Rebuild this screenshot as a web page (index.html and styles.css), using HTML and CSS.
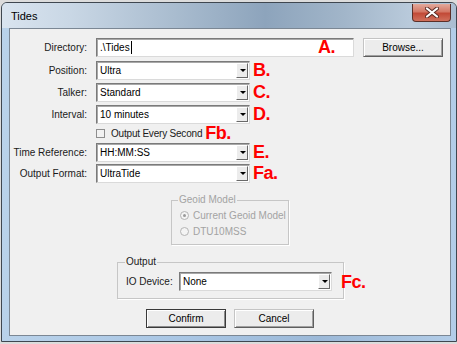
FILE: index.html
```html
<!DOCTYPE html>
<html lang="en">
<head>
    <meta charset="UTF-8">
    <title>Tides</title>
    <link rel="stylesheet" href="styles.css">
</head>
<body>
    <div class="window">
        <div class="titlebar">
            <span class="title">Tides</span>
            <div class="close">
                <svg width="14" height="11" viewBox="0 0 14 11">
                    <path d="M2 1.5 L12 9.5 M12 1.5 L2 9.5" stroke="#5a2a22" stroke-width="4" stroke-linecap="round"/>
                    <path d="M2 1.5 L12 9.5 M12 1.5 L2 9.5" stroke="#fff" stroke-width="2.2" stroke-linecap="round"/>
                </svg>
            </div>
        </div>
        <div class="client">
            <div class="row row-dir">
                <label class="lbl">Directory:</label>
                <div class="textbox">.\Tides<span class="caret"></span><span class="mark mark-a">A.</span></div>
                <button class="btn browse">Browse...</button>
            </div>
            <div class="row row-pos">
                <label class="lbl">Position:</label>
                <div class="combo"><span class="value">Ultra</span><span class="drop"></span></div>
                <span class="mark">B.</span>
            </div>
            <div class="row row-next">
                <label class="lbl">Talker:</label>
                <div class="combo"><span class="value">Standard</span><span class="drop"></span></div>
                <span class="mark">C.</span>
            </div>
            <div class="row row-next">
                <label class="lbl">Interval:</label>
                <div class="combo"><span class="value">10 minutes</span><span class="drop"></span></div>
                <span class="mark">D.</span>
            </div>
            <div class="row row-check">
                <span class="checkbox"></span>
                <span class="check-text">Output Every Second</span>
                <span class="mark mark-fb">Fb.</span>
            </div>
            <div class="row row-time">
                <label class="lbl">Time Reference:</label>
                <div class="combo"><span class="value">HH:MM:SS</span><span class="drop"></span></div>
                <span class="mark">E.</span>
            </div>
            <div class="row row-format">
                <label class="lbl">Output Format:</label>
                <div class="combo"><span class="value">UltraTide</span><span class="drop"></span></div>
                <span class="mark">Fa.</span>
            </div>

            <div class="group geoid">
                <span class="legend">Geoid Model</span>
                <div class="radio-row"><span class="radio checked"></span>Current Geoid Model</div>
                <div class="radio-row"><span class="radio"></span>DTU10MSS</div>
            </div>

            <div class="group output">
                <span class="legend">Output</span>
                <div class="io-row">
                    <label class="io-lbl">IO Device:</label>
                    <div class="combo io-combo"><span class="value">None</span><span class="drop"></span></div>
                </div>
                <span class="mark mark-fc">Fc.</span>
            </div>

            <div class="buttons">
                <button class="btn default">Confirm</button>
                <button class="btn">Cancel</button>
            </div>
        </div>
    </div>
</body>
</html>
```

FILE: styles.css
```css
body {
    margin: 0;
    background-color: #dcdcdc;
    font-family: "Liberation Sans", Arial, sans-serif;
    font-size: 10px;
    color: #1a1a1a;
    overflow: hidden;
}
.window {
    margin: 2px 0 0 1px;
    width: 456px;
    height: 340px;
    box-sizing: border-box;
    border: 1px solid #3f4750;
    border-radius: 6px 6px 0 0;
    background: linear-gradient(90deg, #b9d2ea 0%, #a9c6e4 40%, #9cb9d8 70%, #b3cde8 100%);
    display: flex;
    flex-direction: column;
}
.titlebar {
    height: 25px;
    display: flex;
    align-items: flex-start;
    justify-content: space-between;
    border-radius: 5px 5px 0 0;
    background: linear-gradient(90deg, #d9e4ef 0%, #c9d7e5 15%, #a9bccf 38%, #8da4bc 58%, #a1b5c9 75%, #b9cadb 90%, #aabdd1 100%);
}
.title {
    margin: 7px 0 0 9px;
    font-size: 11px;
    color: #000;
}
.close {
    width: 39px;
    height: 18px;
    margin: 1px 5px 0 0;
    box-sizing: border-box;
    border: 1px solid #5b2f28;
    border-top: none;
    border-radius: 0 0 4px 4px;
    background: linear-gradient(#e3a99b 0%, #d47866 45%, #c24a37 55%, #d0705c 100%);
    display: flex;
    align-items: center;
    justify-content: center;
}
.client {
    margin: 0 5px 5px 7px;
    flex: 1;
    border: 1px solid #7b8794;
    background-color: #f0f0f0;
    padding-top: 9px;
    display: flex;
    flex-direction: column;
}
.row {
    display: flex;
    align-items: center;
    height: 19px;
    position: relative;
}
.row-pos {
    margin-top: 4px;
}
.row-next {
    margin-top: 3px;
}
.row-check {
    margin-top: 2px;
    height: 14px;
    padding-left: 86px;
}
.row-time {
    margin-top: 3px;
}
.row-format {
    margin-top: 2px;
}
.lbl {
    width: 77px;
    margin-right: 9px;
    text-align: right;
}
.textbox, .combo {
    height: 19px;
    box-sizing: border-box;
    border: 1px solid;
    border-color: #7a7a7a #dadada #dadada #7a7a7a;
    box-shadow: inset 1px 1px 0 #a8a8a8;
    background-color: #fff;
    display: flex;
    align-items: center;
    position: relative;
}
.textbox {
    width: 258px;
    padding-left: 3px;
    color: #000;
}
.caret {
    width: 1px;
    height: 13px;
    background-color: #000;
    margin-left: 1px;
}
.combo {
    width: 154px;
    justify-content: space-between;
}
.value {
    padding-left: 3px;
    color: #000;
}
.drop {
    width: 12px;
    height: 15px;
    margin-right: 1px;
    box-sizing: border-box;
    border: 1px solid;
    border-color: #fff #696969 #696969 #fff;
    background-color: #ececec;
    position: relative;
}
.drop::after {
    content: "";
    position: absolute;
    left: 3px;
    top: 5px;
    border-left: 3px solid transparent;
    border-right: 3px solid transparent;
    border-top: 3px solid #000;
}
.mark {
    color: #f00;
    font-weight: bold;
    font-size: 18px;
    letter-spacing: -0.5px;
    margin-left: 3px;
    line-height: 19px;
}
.mark-a {
    position: absolute;
    left: 218px;
    top: -1px;
}
.check-text {
    margin-left: 6px;
    letter-spacing: -0.2px;
}
.btn {
    font-family: "Liberation Sans", Arial, sans-serif;
    font-size: 10px;
    color: #000;
    width: 80px;
    height: 19px;
    padding: 0;
    box-sizing: border-box;
    border: 1px solid;
    border-color: #c4c4c4 #5e5e5e #5e5e5e #c4c4c4;
    box-shadow: inset 1px 1px 0 #fff, inset -1px -1px 0 #a0a0a0;
    background-color: #ececec;
}
.btn.default {
    border-color: #3a3a3a;
    box-shadow: inset 1px 1px 0 #fff, inset -1px -1px 0 #8a8a8a;
}
.browse {
    margin-left: 9px;
}
.checkbox {
    width: 9px;
    height: 9px;
    box-sizing: border-box;
    border: 1px solid #8e8e8e;
    background-color: #f2f2f2;
}
.group {
    box-sizing: border-box;
    border: 1px solid #c6c6c6;
    box-shadow: 1px 1px 0 #fff;
    display: flex;
    flex-direction: column;
    position: relative;
}
.legend {
    margin: -7px 0 0 6px;
    padding: 0 1px;
    line-height: 12px;
    align-self: flex-start;
    background-color: #f0f0f0;
}
.geoid {
    margin: 17px 0 0 161px;
    width: 118px;
    height: 45px;
    color: #a3a3a3;
}
.radio-row {
    display: flex;
    align-items: center;
    height: 16px;
    padding-left: 8px;
}
.radio-row:first-of-type {
    margin-top: 1px;
}
.radio {
    width: 9px;
    height: 9px;
    box-sizing: border-box;
    border: 1px solid #b4b4b4;
    border-radius: 50%;
    background-color: #f4f4f4;
    margin-right: 4px;
    position: relative;
}
.radio.checked::after {
    content: "";
    position: absolute;
    left: 2px;
    top: 2px;
    width: 3px;
    height: 3px;
    border-radius: 50%;
    background-color: #9a9a9a;
}
.output {
    margin: 17px 0 0 107px;
    width: 227px;
    height: 37px;
}
.output .legend {
    margin-left: 7px;
}
.io-row {
    display: flex;
    align-items: center;
    margin-top: 4px;
    padding-left: 8px;
}
.io-lbl {
    width: 53px;
}
.io-combo {
    width: 153px;
}
.mark-fc {
    position: absolute;
    left: 220px;
    top: 10px;
}
.buttons {
    display: flex;
    margin: 10px 0 0 136px;
    gap: 8px;
}
```
